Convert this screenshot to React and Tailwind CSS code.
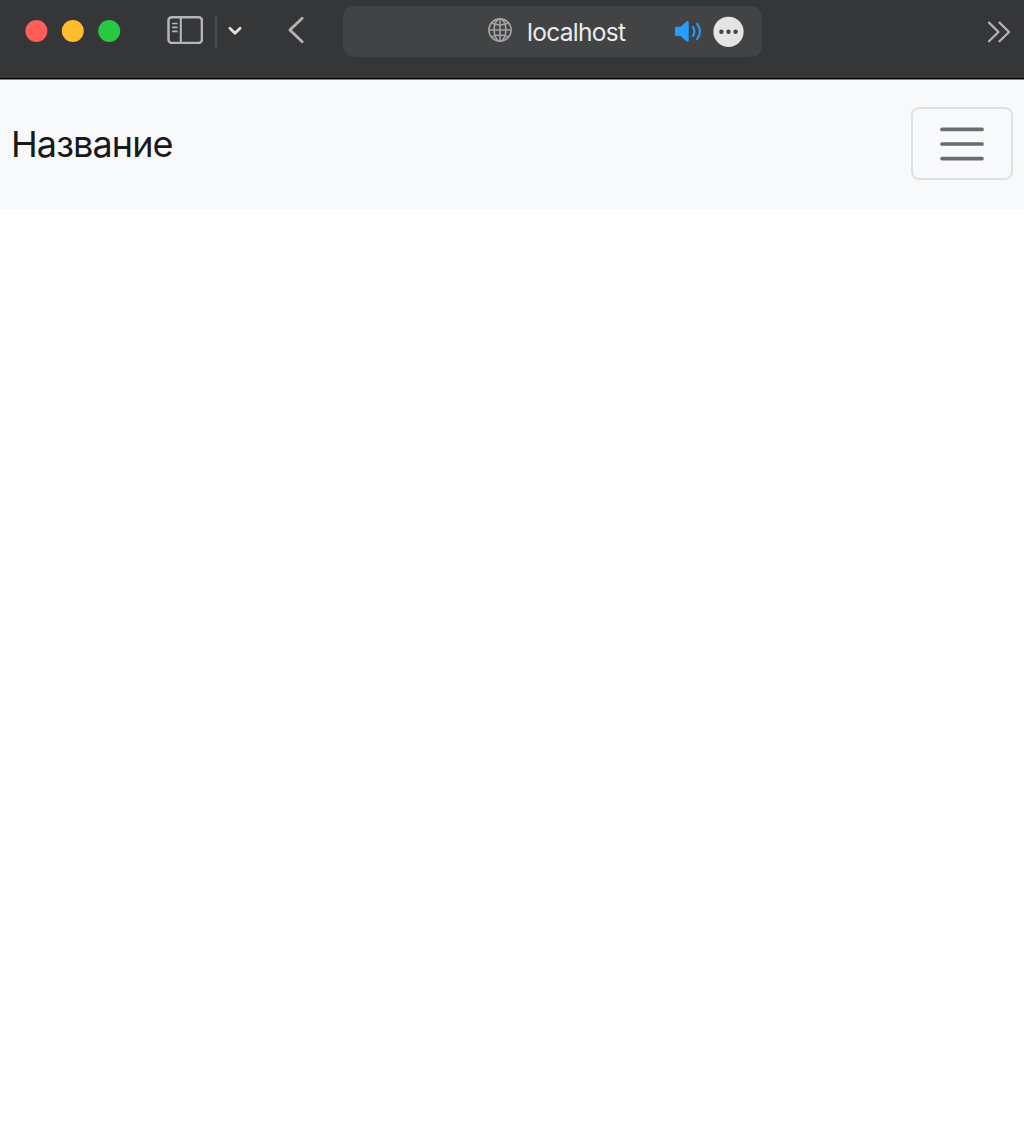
function SidebarIcon() {
  return (
    <svg className="ml-[46px] h-7 w-9 shrink-0 -translate-y-px" viewBox="0 0 36 28" fill="none" stroke="#b4b5b6">
      <rect x="1.5" y="1.3" width="33.4" height="25.6" rx="3.2" strokeWidth="2.5" />
      <path d="M13.8 1.5V27" strokeWidth="2.1" />
      <path d="M5.8 7.5h4M5.8 11.4h4M5.8 15.4h4" strokeWidth="1.7" strokeLinecap="round" />
    </svg>
  );
}

function Globe() {
  return (
    <svg className="h-6 w-6 shrink-0 -translate-y-px" viewBox="0 0 24 24" fill="none" stroke="#a2a3a4" strokeWidth="1.6">
      <circle cx="12" cy="12" r="11.1" />
      <ellipse cx="12" cy="12" rx="5.9" ry="11.1" />
      <path d="M12 1v22M1 12h22M3.6 5.1Q12 8.8 20.4 5.1M3.6 18.9Q12 15.2 20.4 18.9" />
    </svg>
  );
}

function Speaker() {
  return (
    <svg className="ml-12 h-[22px] w-7 shrink-0" viewBox="0 0 28 22" fill="none">
      <path d="M1.4 6.7h4.2l6-5.2c.9-.8 2.1-.5 2.1.7v18.5c0 1.2-1.2 1.5-2.1.7l-6-5.3H1.2Q0 16.1 0 15V7.8q0-1.1 1.4-1.1Z" fill="#269eff" />
      <path d="M18 7.1q2.8 4.4 0 8.8M22.1 3.9q5.8 7.6 0 15.2" stroke="#269eff" strokeWidth="2" strokeLinecap="round" />
    </svg>
  );
}

function AddressBar() {
  return (
    <div className="ml-[38px] flex h-[51px] w-[419px] shrink-0 items-center rounded-[11px] bg-[#424345] pl-[145px]">
      <Globe />
      <span className="ml-[15px] w-[100px] translate-y-px whitespace-nowrap text-[24.5px] leading-none tracking-[-0.7px] text-[#ebebeb]">localhost</span>
      <Speaker />
      <svg className="ml-[9.5px] h-[31px] w-[31px] shrink-0" viewBox="0 0 31 31">
        <circle cx="15.5" cy="15.8" r="15.1" fill="#e4e4e4" />
        <g fill="#424345">
          <circle cx="8.4" cy="15.8" r="2.2" />
          <circle cx="15.5" cy="15.8" r="2.2" />
          <circle cx="22.6" cy="15.8" r="2.2" />
        </g>
      </svg>
    </div>
  );
}

function BrowserToolbar() {
  return (
    <header className="h-20 border-b border-[#828384] bg-[#353638]">
      <div className="h-[79px] border-b border-black">
        <div className="flex h-[62px] items-center pl-[25px]">
          <svg className="h-6 w-24 shrink-0" viewBox="0 0 96 24">
            <circle cx="11.4" cy="12" r="11" fill="#ff5f57" />
            <circle cx="47.8" cy="12" r="11" fill="#febc2e" />
            <circle cx="84.2" cy="12" r="11" fill="#28c840" />
          </svg>
          <SidebarIcon />
          <div className="ml-3 h-[33px] w-[1.5px] shrink-0 bg-[#4c4d4f]" />
          <svg className="ml-[10.5px] h-4 w-4 shrink-0" viewBox="0 0 16 16" fill="none" stroke="#e1e1e1" strokeWidth="2.8" strokeLinecap="round" strokeLinejoin="round">
            <path d="m2.9 5.2 5.1 5 5.1-5" />
          </svg>
          <svg className="ml-11 h-7 w-[18px] shrink-0 -translate-y-px" viewBox="0 0 18 28" fill="none" stroke="#b4b5b6" strokeWidth="2.8" strokeLinecap="round" strokeLinejoin="round">
            <path d="M15.2 2.2 2.9 14l12.3 11.8" />
          </svg>
          <AddressBar />
          <svg className="mr-[13px] ml-auto h-[22px] w-6 shrink-0 translate-y-px" viewBox="0 0 24 22" fill="none" stroke="#b4b5b6" strokeWidth="2.2" strokeLinecap="round" strokeLinejoin="round">
            <path d="m2 1.6 9.5 9.4L2 20.3M12.5 1.6 22 11l-9.5 9.3" />
          </svg>
        </div>
      </div>
    </header>
  );
}

function Navbar() {
  return (
    <nav className="flex h-[129px] items-center justify-between bg-[#f8f9fb] pr-[11px] pb-[1.5px] pl-[11px]">
      <a className="text-[36px] leading-none tracking-[-0.9px] text-[#18191a]">Название</a>
      <button className="flex h-[73px] w-[102px] items-center justify-center rounded-[8px] border-2 border-[#dfe0e1]" aria-label="Меню">
        <svg className="h-11 w-11" viewBox="0 0 44 44" stroke="#6a6b6c" strokeWidth="3.7" strokeLinecap="round">
          <path d="M2 7.4h40M2 22h40M2 36.6h40" />
        </svg>
      </button>
    </nav>
  );
}

export default function App() {
  return (
    <div className="min-h-screen bg-white font-['Inter',sans-serif]">
      <BrowserToolbar />
      <Navbar />
    </div>
  );
}
